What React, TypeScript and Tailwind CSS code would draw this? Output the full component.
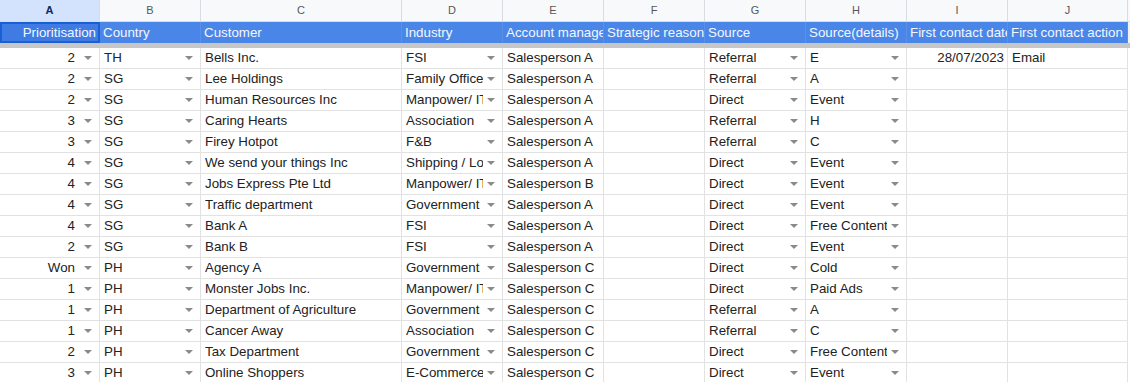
const cols = ["A", "B", "C", "D", "E", "F", "G", "H", "I", "J"];
const widths = ["w-[100px]", "w-[101px]", "w-[201px]", "w-[101px]", "w-[101px]", "w-[101px]", "w-[101px]", "w-[101px]", "w-[101px]", "w-[120px]"];
const headers = ["Prioritisation", "Country", "Customer", "Industry", "Account manager", "Strategic reason", "Source", "Source(details)", "First contact date", "First contact action"];
const dropdownCols = [0, 1, 3, 6, 7];

const rows: string[][] = [
  ["2", "TH", "Bells Inc.", "FSI", "Salesperson A", "", "Referral", "E", "28/07/2023", "Email"],
  ["2", "SG", "Lee Holdings", "Family Office", "Salesperson A", "", "Referral", "A", "", ""],
  ["2", "SG", "Human Resources Inc", "Manpower/ IT", "Salesperson A", "", "Direct", "Event", "", ""],
  ["3", "SG", "Caring Hearts", "Association", "Salesperson A", "", "Referral", "H", "", ""],
  ["3", "SG", "Firey Hotpot", "F&B", "Salesperson A", "", "Referral", "C", "", ""],
  ["4", "SG", "We send your things Inc", "Shipping / Logistics", "Salesperson A", "", "Direct", "Event", "", ""],
  ["4", "SG", "Jobs Express Pte Ltd", "Manpower/ IT", "Salesperson B", "", "Direct", "Event", "", ""],
  ["4", "SG", "Traffic department", "Government", "Salesperson A", "", "Direct", "Event", "", ""],
  ["4", "SG", "Bank A", "FSI", "Salesperson A", "", "Direct", "Free Content", "", ""],
  ["2", "SG", "Bank B", "FSI", "Salesperson A", "", "Direct", "Event", "", ""],
  ["Won", "PH", "Agency A", "Government", "Salesperson C", "", "Direct", "Cold", "", ""],
  ["1", "PH", "Monster Jobs Inc.", "Manpower/ IT", "Salesperson C", "", "Direct", "Paid Ads", "", ""],
  ["1", "PH", "Department of Agriculture", "Government", "Salesperson C", "", "Referral", "A", "", ""],
  ["1", "PH", "Cancer Away", "Association", "Salesperson C", "", "Referral", "C", "", ""],
  ["2", "PH", "Tax Department", "Government", "Salesperson C", "", "Direct", "Free Content", "", ""],
  ["3", "PH", "Online Shoppers", "E-Commerce", "Salesperson C", "", "Direct", "Event", "", ""],
];

function Arrow() {
  return (
    <svg width="8" height="4" viewBox="0 0 8 4" className="shrink-0">
      <path d="M0 0 L8 0 L4 4 Z" fill="#8a8a8a" />
    </svg>
  );
}

function Cell({ value, col }: { value: string; col: number }) {
  const right = col === 0 || col === 8;
  const dd = dropdownCols.includes(col);
  return (
    <div className={`${widths[col]} flex h-[21px] shrink-0 items-center border-r border-b border-[#e2e2e2] pl-[4px] ${dd ? "pr-[7px]" : "pr-[3px]"}`}>
      <span className={`min-w-0 flex-1 overflow-hidden whitespace-nowrap ${right ? "text-right" : ""} ${dd && right ? "mr-[9px]" : dd ? "mr-[4px]" : ""}`}>
        {value}
      </span>
      {dd && <Arrow />}
    </div>
  );
}

export default function App() {
  return (
    <div className="h-[382px] w-[1130px] overflow-hidden bg-white font-['Liberation_Sans',Arial,sans-serif] text-[13.33px] text-[#222]">
      {/* column letters */}
      <div className="flex h-[22px] bg-[#f8f9fa]">
        {cols.map((c, i) => (
          <div
            key={c}
            className={`${widths[i]} flex shrink-0 items-center justify-center border-r border-b border-[#dadce0] text-[11px] ${i === 0 ? "bg-[#d3e3fd] font-bold text-[#0b2a5c]" : "text-[#575757]"}`}
          >
            {c}
          </div>
        ))}
        <div className="flex-1 border-b border-[#dadce0]" />
      </div>

      {/* header row */}
      <div className="flex h-[21px] bg-[#f1f1f1]">
        {headers.map((h, i) => (
          <div
            key={h}
            className={`${widths[i]} flex shrink-0 items-center overflow-hidden whitespace-nowrap text-[#f4f7fd] ${i === 0 ? "justify-end border-2 border-[#1a5fd4] bg-[#3f7be3] pr-[2px]" : "border-r border-[#5b90ea] bg-[#4a86e8] pl-[3px]"}`}
          >
            {h}
          </div>
        ))}
      </div>

      {/* freeze bar */}
      <div className="h-[5px] bg-[#c7c7c7]" />

      {rows.map((r, ri) => (
        <div key={ri} className="flex">
          {r.map((v, ci) => (
            <Cell key={ci} value={v} col={ci} />
          ))}
        </div>
      ))}
    </div>
  );
}
